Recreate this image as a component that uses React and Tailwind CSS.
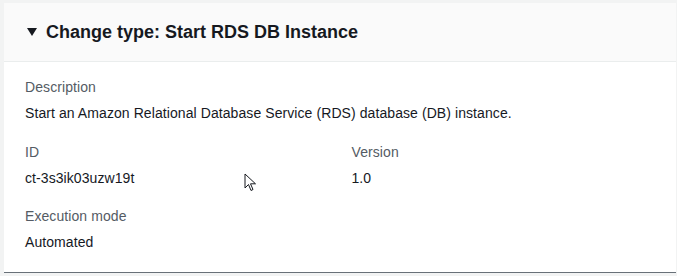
import React from "react";

const Field = ({ label, value }) => (
  <div>
    <div className="text-[14px] leading-[22px] text-[#545b64]">{label}</div>
    <div className="mt-[4px] text-[14px] leading-[22px] text-[#16191f]">{value}</div>
  </div>
);

export default function App() {
  return (
    <div className="w-[677px] h-[276px] bg-[#f2f3f3] pl-[4px] pt-[3px] overflow-hidden" style={{ fontFamily: '"Liberation Sans", Arial, sans-serif' }}>
      <div className="relative w-[672px] bg-white border-b border-[#687078]">
        <div className="h-[59px] bg-[#fafafa] border-b border-[#eaeded] flex items-center pl-[23px]">
          <svg width="10" height="8" viewBox="0 0 10 8" className="mr-[9px]">
            <path d="M0 0 L10 0 L5 8 Z" fill="#16191f" />
          </svg>
          <h2 className="text-[18px] font-bold text-[#16191f]">Change type: Start RDS DB Instance</h2>
        </div>
        <div className="pl-[21px] pr-5 pt-[14px] pb-[19px] tracking-[0.08px]">
          <Field label="Description" value="Start an Amazon Relational Database Service (RDS) database (DB) instance." />
          <div className="grid grid-cols-2 gap-x-5 mt-[17px]">
            <Field label="ID" value="ct-3s3ik03uzw19t" />
            <div className="pl-[1px]">
              <Field label="Version" value="1.0" />
            </div>
          </div>
          <div className="mt-[16px]">
            <Field label="Execution mode" value="Automated" />
          </div>
        </div>
        {/* mouse cursor */}
        <svg className="absolute left-[240px] top-[170px]" width="14" height="20" viewBox="0 0 14 20">
          <path d="M1 1 L1 15 L4.5 11.5 L7 17.5 L9 16.5 L6.5 10.8 L11.5 10.8 Z" fill="white" stroke="#16191f" strokeWidth="1" strokeLinejoin="miter" />
        </svg>
      </div>
    </div>
  );
}
